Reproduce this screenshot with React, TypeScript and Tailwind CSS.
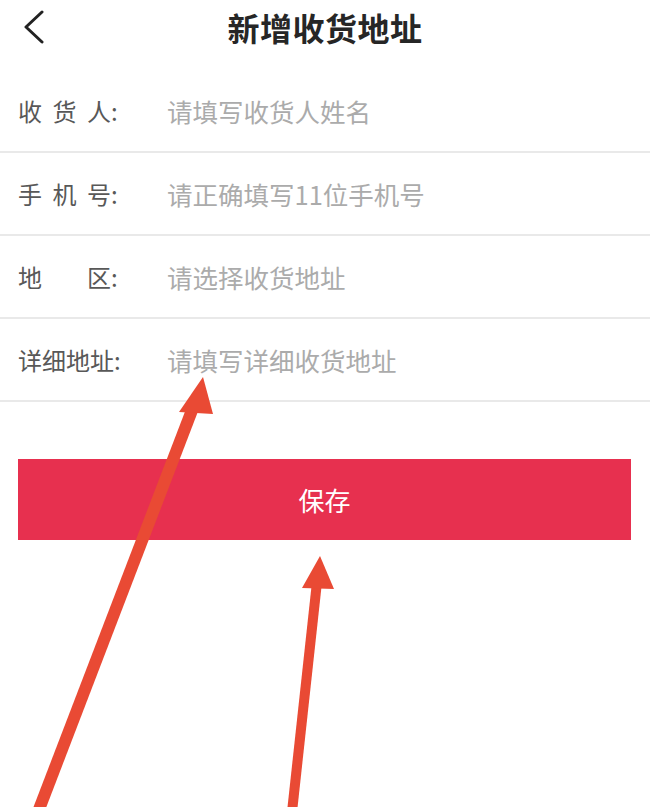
const rows = [
  { label: ['收', '货', '人'], placeholder: '请填写收货人姓名' },
  { label: ['手', '机', '号'], placeholder: '请正确填写11位手机号' },
  { label: ['地', '区'], placeholder: '请选择收货地址' },
  { label: ['详', '细', '地', '址'], placeholder: '请填写详细收货地址' },
];

function BackIcon() {
  return (
    <svg width="24" height="34" viewBox="0 0 24 34" fill="none">
      <polyline points="20,2 4,17 20,32" stroke="#222" strokeWidth="3" strokeLinecap="round" strokeLinejoin="round" />
    </svg>
  );
}

// the two red annotation arrows drawn over the screenshot
function Arrows() {
  return (
    <svg className="absolute inset-0 pointer-events-none" width="650" height="807" viewBox="0 0 650 807">
      <line x1="38" y1="812" x2="194" y2="405" stroke="#e94a34" strokeWidth="12" />
      <polygon points="203,377 179,412 213,414" fill="#e94a34" />
      <line x1="292" y1="812" x2="317" y2="582" stroke="#e94a34" strokeWidth="10" />
      <polygon points="320,556 302,588 334,589" fill="#e94a34" />
    </svg>
  );
}

export default function App() {
  return (
    <div
      className="relative w-[650px] h-[807px] overflow-hidden bg-white"
      style={{ fontFamily: '"Noto Sans CJK SC", "Noto Sans", sans-serif' }}
    >
      {/* Top bar */}
      <header className="flex items-center h-[54px]">
        <div className="w-[70px] pl-[22px] flex items-center">
          <BackIcon />
        </div>
        <h1 className="flex-1 text-center text-[32px] font-bold text-[#262626] leading-none tracking-[0.5px]">新增收货地址</h1>
        <div className="w-[70px]" />
      </header>

      {/* Form */}
      <div className="pt-[16px]">
        {rows.map((r, i) => (
          <div key={i} className="flex items-center h-[83px] border-b-2 border-[#e9e9e9] pl-[18px]">
            <div className="w-[149px] flex items-center text-[24px] text-[#585858] leading-none">
              <div className="min-w-[93px] flex justify-between">
                {r.label.map((c, j) => (
                  <span key={j}>{c}</span>
                ))}
              </div>
              <span>:</span>
            </div>
            <span className="text-[25.5px] text-[#ababab] leading-none">{r.placeholder}</span>
          </div>
        ))}
      </div>

      {/* Save */}
      <div className="pl-[18px] pr-[19px] mt-[57px]">
        <button className="w-full h-[81px] bg-[#e7304f] text-white text-[26px] leading-none">保存</button>
      </div>

      <Arrows />
    </div>
  );
}
